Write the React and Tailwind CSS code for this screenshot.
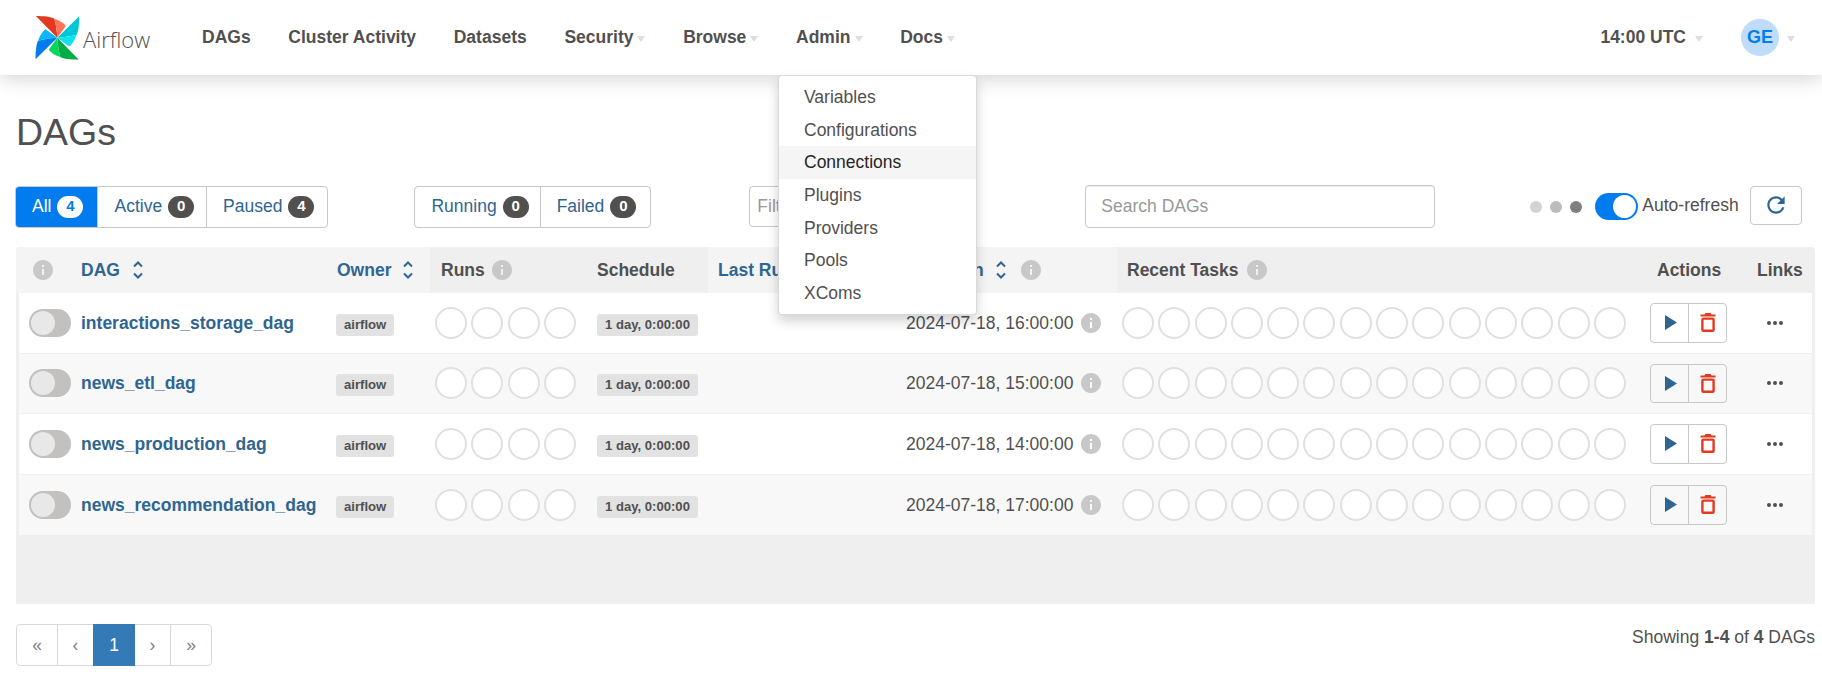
const INFO = "M12 2C6.48 2 2 6.48 2 12s4.48 10 10 10 10-4.48 10-10S17.52 2 12 2zm1 15h-2v-6h2v6zm0-8h-2V7h2v2z";
const REFRESH = "M17.65 6.35C16.2 4.9 14.21 4 12 4c-4.42 0-7.99 3.58-7.99 8s3.57 8 7.99 8c3.73 0 6.84-2.55 7.73-6h-2.08c-.82 2.33-3.04 4-5.65 4-3.31 0-6-2.69-6-6s2.69-6 6-6c1.66 0 3.14.69 4.22 1.78L13 11h7V4l-2.35 2.35z";

const HEAD_COLS = "grid-cols-[55px_255px_104px_157px_121px_189px_220px_523px_105px_70px]";
const ROW_COLS = "grid-cols-[52px_255px_104px_157px_121px_189px_220px_523px_105px_67px]";

function Info({ className = "" }) {
  return (
    <svg viewBox="0 0 24 24" className={`w-6 h-6 shrink-0 text-[#c8c8c8] ${className}`} fill="currentColor">
      <path d={INFO} />
    </svg>
  );
}

function Sort({ className = "" }) {
  return (
    <svg viewBox="0 0 12 20" className={`w-3 h-5 shrink-0 text-[#2f6591] ${className}`} fill="none" stroke="currentColor" strokeWidth="2">
      <path d="M2 6.5 6 2.5l4 4M2 13.5l4 4 4-4" />
    </svg>
  );
}

function Caret({ className = "" }) {
  return (
    <span className={`inline-block w-0 h-0 border-x-[4.5px] border-x-transparent border-t-[6px] border-t-[#e3d9e8] ${className}`} />
  );
}

function Logo() {
  const blade = (main, sec, deg) => (
    <g key={main} transform={`rotate(${deg} 67 66)`}>
      <path d="M2 0C25 0 48 2 58 8C64 30 66 50 67 66Z" fill={main} />
      <path d="M58 8C72 12 86 20 93 30L67 66C66 50 64 30 58 8Z" fill={sec} />
    </g>
  );
  return (
    <svg viewBox="0 0 135 133" className="w-[45px] h-[44px] shrink-0">
      {blade("#e43921", "#ff7557", 0)}
      {blade("#00c7d4", "#11e1ee", 90)}
      {blade("#00ad46", "#04d659", 180)}
      {blade("#017cee", "#0cb6ff", 270)}
    </svg>
  );
}

function NavItem({ label, caret }) {
  return (
    <span className="flex items-center">
      <span>{label}</span>
      {caret && <Caret className="ml-1 mt-[2px]" />}
    </span>
  );
}

function Count({ n, active }) {
  return (
    <span className={`ml-[6px] w-[26px] h-[22px] rounded-full flex items-center justify-center text-[15px] font-bold ${active ? "bg-white text-[#017cee]" : "bg-[#51504f] text-white"}`}>
      {n}
    </span>
  );
}

function FilterBtn({ label, n, active, last, pr = "pr-[14px]" }) {
  return (
    <span className={`h-full pl-4 ${pr} flex items-center ${active ? "bg-[#017cee] text-white" : "text-[#2f6591]"} ${last ? "" : "border-r border-[#c8c8c8]"}`}>
      {label}
      <Count n={n} active={active} />
    </span>
  );
}

function Circles({ n, className = "" }) {
  return (
    <div className={`flex gap-[4.3px] ${className}`}>
      {Array.from({ length: n }).map((_, i) => (
        <span key={i} className="w-8 h-8 rounded-full border-2 border-[#e0e0e0] bg-white" />
      ))}
    </div>
  );
}

function Badge({ children }) {
  return (
    <span className="inline-flex items-center h-[22px] px-2 mt-1 rounded-[3px] bg-[#e2e2e2] text-[13.1px] font-bold text-[#51504f]">
      {children}
    </span>
  );
}

function Row({ name, date, shaded, last }) {
  return (
    <div className={`grid ${ROW_COLS} h-[60.5px] items-center ${shaded ? "bg-[#f8f8f8]" : "bg-white"} ${last ? "" : "border-b border-[#efefef]"}`}>
      <div className="pl-[10px] flex items-center">
        <span className="w-[42px] h-[28px] rounded-full bg-[#c2c1bf] flex items-center pl-[2px]">
          <span className="w-6 h-6 rounded-full bg-[#e8e8e8]" />
        </span>
      </div>
      <div className="pl-[10px] font-bold text-[#2f6591]">{name}</div>
      <div className="pl-[10px]"><Badge>airflow</Badge></div>
      <div className="pl-[5px]"><Circles n={4} /></div>
      <div className="pl-[10px]"><Badge>1 day, 0:00:00</Badge></div>
      <div />
      <div className="pl-[9px] flex items-center">
        <span>{date}</span>
        <Info className="ml-[6px]" />
      </div>
      <div className="pl-[5px]"><Circles n={14} /></div>
      <div className="pl-[10px]">
        <div className="flex w-[77px] h-[39.5px] border border-[#c8c8c8] rounded-[4px]">
          <span className="w-[38px] border-r border-[#c8c8c8] flex items-center justify-center pl-[2px]">
            <svg viewBox="0 0 12 15" className="w-3 h-[15px] text-[#2f6591]" fill="currentColor"><path d="M0 0 12 7.5 0 15Z" /></svg>
          </span>
          <span className="flex-1 flex items-center justify-center">
            <svg viewBox="0 0 16 19" className="w-4 h-[19px] text-[#e43921]" fill="currentColor">
              <path d="M5.5 0h5l1 1.500H15.500v2H.5v-2H4.500Z" />
              <rect x="2.4" y="5.6" width="11.2" height="12.2" rx="1" fill="none" stroke="currentColor" strokeWidth="2.4" />
            </svg>
          </span>
        </div>
      </div>
      <div className="pl-[22px]">
        <svg viewBox="0 0 16 4" className="w-4 h-1 text-[#51504f]" fill="currentColor">
          <circle cx="2" cy="2" r="2" /><circle cx="8" cy="2" r="2" /><circle cx="14" cy="2" r="2" />
        </svg>
      </div>
    </div>
  );
}

export default function App() {
  const rows = [
    ["interactions_storage_dag", "2024-07-18, 16:00:00"],
    ["news_etl_dag", "2024-07-18, 15:00:00"],
    ["news_production_dag", "2024-07-18, 14:00:00"],
    ["news_recommendation_dag", "2024-07-18, 17:00:00"],
  ];
  const menu = ["Variables", "Configurations", "Connections", "Plugins", "Providers", "Pools", "XComs"];
  return (
    <div className="relative w-[1822px] h-[679px] overflow-hidden bg-white font-['Liberation_Sans',Arial,sans-serif] text-[17.5px] text-[#51504f]">
      <nav className="relative z-10 h-[75px] bg-white flex items-center pl-[35px] pr-[27px] shadow-[0_2px_20px_rgba(0,0,0,0.2)]">
        <Logo />
        <span className="ml-[3px] mt-[2px] w-[68px] font-['Open_Sans',sans-serif] font-light text-[22px] leading-none">Airflow</span>
        <div className="ml-[51px] flex items-center gap-[37.7px] font-bold">
          <NavItem label="DAGs" />
          <NavItem label="Cluster Activity" />
          <NavItem label="Datasets" />
          <NavItem label="Security" caret />
          <NavItem label="Browse" caret />
          <NavItem label="Admin" caret />
          <NavItem label="Docs" caret />
        </div>
        <div className="ml-auto flex items-center font-bold">
          <span>14:00 UTC</span>
          <Caret className="ml-[9px] mt-[2px]" />
          <span className="ml-[38px] w-[38px] h-[37px] rounded-full bg-[#bfdcfb] text-[#017cee] text-[18px] flex items-center justify-center">GE</span>
          <Caret className="ml-2 mt-[2px]" />
        </div>
      </nav>

      <div className="absolute z-20 left-[778px] top-[75px] w-[199px] h-[240px] py-[5px] bg-white border border-black/15 rounded-[4px] shadow-[0_6px_12px_rgba(0,0,0,0.175)]">
        {menu.map((m) => (
          <div key={m} className={`h-[32.6px] pl-[25px] flex items-center ${m === "Connections" ? "bg-[#f5f5f5] text-[#262626]" : ""}`}>{m}</div>
        ))}
      </div>

      <main className="px-4">
        <h1 className="mt-[36px] h-[42px] text-[37.5px] leading-[42px]">DAGs</h1>

        <div className="mt-[32px] flex items-center h-[43px]">
          <div className="flex h-[42px] border border-[#c8c8c8] rounded-[4px] overflow-hidden -ml-px">
            <FilterBtn label="All" n={4} active />
            <FilterBtn label="Active" n={0} pr="pr-[12px]" />
            <FilterBtn label="Paused" n={4} last pr="pr-[13px]" />
          </div>
          <div className="ml-[86px] flex h-[42px] border border-[#c8c8c8] rounded-[4px] overflow-hidden">
            <FilterBtn label="Running" n={0} pr="pr-[11px]" />
            <FilterBtn label="Failed" n={0} last />
          </div>
          <div className="ml-[98px] w-[216px] h-[41px] border border-[#c8c8c8] rounded-[4px] flex items-center pl-[7px] text-[#999999] overflow-hidden whitespace-nowrap">Filter DAGs by tag</div>
          <div className="ml-[120px] w-[350px] h-[43px] border border-[#c8c8c8] rounded-[4px] flex items-center pl-[15px] text-[#999999] shadow-[inset_0_1px_1px_rgba(0,0,0,0.075)]">Search DAGs</div>
          <span className="ml-[95px] w-3 h-3 rounded-full bg-[#d4d4d4]" />
          <span className="ml-2 w-3 h-3 rounded-full bg-[#bcbcbc]" />
          <span className="ml-2 w-3 h-3 rounded-full bg-[#7f7f7f]" />
          <span className="ml-[13px] w-[43px] h-[27px] rounded-full bg-[#017cee] flex items-center justify-end pr-[2px]">
            <span className="w-[23px] h-[23px] rounded-full bg-white" />
          </span>
          <span className="ml-[4px] mb-[3px] w-[95px] whitespace-nowrap">Auto-refresh</span>
          <span className="ml-[13px] mb-[3px] w-[52px] h-[39px] border border-[#c8c8c8] rounded-[4px] flex items-center justify-center text-[#2f6591]">
            <svg viewBox="0 0 24 24" className="w-[26px] h-[26px]" fill="currentColor"><path d={REFRESH} /></svg>
          </span>
        </div>

        <div className="mt-[19px] w-[1799px] h-[357px] bg-[#efefef] rounded-t-[4px]">
          <div className={`grid ${HEAD_COLS} h-[46px] items-center font-bold`}>
            <div className="h-full bg-[#f4f4f4] rounded-tl-[4px] flex items-center pl-[15px]"><Info /></div>
            <div className="h-full bg-[#f4f4f4] flex items-center pl-[10px] text-[#2f6591]">DAG<Sort className="ml-3" /></div>
            <div className="h-full bg-[#f4f4f4] flex items-center pl-[11px] text-[#2f6591]">Owner<Sort className="ml-[11px]" /></div>
            <div className="h-full flex items-center pl-[11px]">Runs<Info className="ml-[5px]" /></div>
            <div className="h-full flex items-center pl-[10px]">Schedule</div>
            <div className="h-full bg-[#f4f4f4] flex items-center pl-[10px] text-[#2f6591] whitespace-nowrap">Last Run</div>
            <div className="h-full bg-[#f4f4f4] flex items-center pl-[10px] text-[#2f6591]">Next Run<Sort className="ml-[11px]" /><Info className="ml-3" /></div>
            <div className="h-full flex items-center pl-[10px]">Recent Tasks<Info className="ml-[6px]" /></div>
            <div className="h-full flex items-center pl-[17px]">Actions</div>
            <div className="h-full flex items-center pl-[12px]">Links</div>
          </div>
          <div className="mx-[3px]">
            {rows.map(([n, d], i) => (
              <Row key={n} name={n} date={d} shaded={i % 2 === 1} last={i === 3} />
            ))}
          </div>
        </div>

        <div className="mt-5 flex w-[1799px] items-start justify-between">
          <div className="flex h-[42px] w-[196px] border border-[#d8d8d8] rounded-[4px] text-[#7a7f87]">
            <span className="w-[41px] border-r border-[#d8d8d8] flex items-center justify-center">«</span>
            <span className="w-[35px] flex items-center justify-center">‹</span>
            <span className="w-[42px] -my-px bg-[#337ab7] text-white flex items-center justify-center">1</span>
            <span className="w-[36px] border-r border-[#d8d8d8] flex items-center justify-center">›</span>
            <span className="flex-1 flex items-center justify-center">»</span>
          </div>
          <div>Showing <b>1-4</b> of <b>4</b> DAGs</div>
        </div>
      </main>
    </div>
  );
}
